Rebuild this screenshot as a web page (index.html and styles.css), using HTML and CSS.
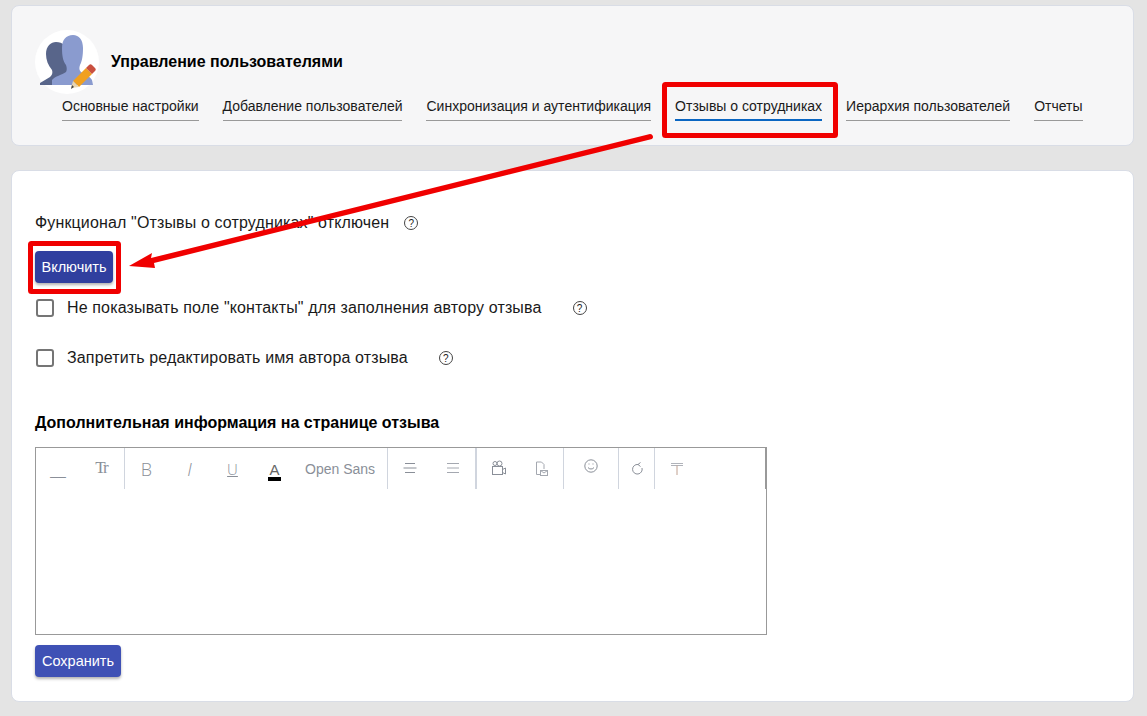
FILE: index.html
```html
<!DOCTYPE html>
<html lang="ru">
<head>
    <meta charset="UTF-8">
    <title>Управление пользователями</title>
    <link rel="stylesheet" href="styles.css">
</head>
<body>
    <header class="head-card">
        <div class="head-top">
            <svg class="avatar" width="64" height="64" viewBox="0 0 64 64">
                <circle cx="32" cy="32" r="32" fill="#fff"/>
                <path d="M5 55 L5 53 L15 47 C17 45 18 43 17 40 C13 35 11 30 11 24 C11 16 16 12 21 12 C28 12 32 16 32 24 L34 55 Z" fill="#58658a"/>
                <path d="M17 55 L17 50 C20 46 27 45 31 42 C32 40 32 38 31 35 C28 31 27 26 27 18 C27 10 31 5 38 5 C44 5 48 10 48 18 C48 26 47 31 45 35 C44 38 44 40 46 42 C50 45 55 46 57 50 L58 55 Z" fill="#8a9bcf"/>
                <path d="M38 51 L51 38 L57 44 L44 57 Z" fill="#f0a020"/>
                <path d="M51 38 L54 35 C55 34 56 34 57 35 L60 38 C61 39 61 40 60 41 L57 44 Z" fill="#c9503f"/>
                <path d="M38 51 L44 57 L36 58 Z" fill="#e8d5b0"/>
                <path d="M37 55 L39 57 L36 59 Z" fill="#444"/>
            </svg>
            <h1 class="head-title">Управление пользователями</h1>
        </div>
        <nav class="tabs">
            <a class="tab">Основные настройки</a>
            <a class="tab">Добавление пользователей</a>
            <a class="tab">Синхронизация и аутентификация</a>
            <a class="tab active">Отзывы о сотрудниках</a>
            <a class="tab">Иерархия пользователей</a>
            <a class="tab">Отчеты</a>
        </nav>
    </header>

    <main class="main-card">
        <div class="status-row">
            <span>Функционал "Отзывы о сотрудниках" отключен</span>
            <span class="help">?</span>
        </div>
        <button class="btn btn-dark">Включить</button>
        <label class="check-row">
            <span class="box"></span>
            <span>Не показывать поле "контакты" для заполнения автору отзыва</span>
            <span class="help help-gap">?</span>
        </label>
        <label class="check-row second">
            <span class="box"></span>
            <span>Запретить редактировать имя автора отзыва</span>
            <span class="help help-gap">?</span>
        </label>
        <h2 class="section-title">Дополнительная информация на странице отзыва</h2>
        <div class="editor">
            <div class="toolbar">
                <div class="group g1">
                    <span class="tool line-tool">__</span>
                    <span class="tool serif">Tr</span>
                </div>
                <div class="group g2">
                    <span class="tool big">B</span>
                    <span class="tool big ital">I</span>
                    <span class="tool under">U</span>
                    <span class="tool color">A</span>
                    <span class="font-name">Open Sans</span>
                </div>
                <div class="group g3">
                    <span class="tool">
                        <svg width="14" height="13" viewBox="0 0 14 13"><path d="M2 1.5H12M0.5 6H13.5M2 10.5H12" stroke="#8a8f98" fill="none"/></svg>
                    </span>
                    <span class="tool">
                        <svg width="14" height="13" viewBox="0 0 14 13"><path d="M1 1.5H13M1 6H13M1 10.5H13" stroke="#a4a8b0" fill="none"/></svg>
                    </span>
                </div>
                <div class="group g4">
                    <span class="tool">
                        <svg width="16" height="16" viewBox="0 0 16 16" fill="none" stroke="#8a8f98"><rect x="1.5" y="6.5" width="10" height="8"/><circle cx="4" cy="3.5" r="2"/><circle cx="8.5" cy="3.5" r="2.5"/><path d="M11.5 9.5L14.5 8V14L11.5 12.5"/></svg>
                    </span>
                    <span class="tool">
                        <svg width="13" height="15" viewBox="0 0 13 15" fill="none" stroke="#a4a8b0"><path d="M6 13.5H1.5V1H6.5L9 3.5V8"/><rect x="5.5" y="9.5" width="7" height="5"/><path d="M5.5 9.5L9 12L12.5 9.5"/></svg>
                    </span>
                </div>
                <div class="group g5">
                    <span class="tool smile">
                        <svg width="14" height="14" viewBox="0 0 14 14" fill="none" stroke="#8a8f98"><circle cx="7" cy="7" r="6.2"/><path d="M4 8.5C5 10.5 9 10.5 10 8.5"/><path d="M4.5 5H5.5M8.5 5H9.5"/></svg>
                    </span>
                </div>
                <div class="group g6">
                    <span class="tool undo">
                        <svg width="12" height="13" viewBox="0 0 12 13" fill="none" stroke="#8a8f98"><path d="M7 2.5A4.8 4.8 0 1 0 11 6"/><path d="M9.5 0.5L7 2.5L9.5 4.5"/></svg>
                    </span>
                </div>
                <div class="group g7">
                    <span class="tool">
                        <svg width="12" height="13" viewBox="0 0 12 13" fill="none"><path d="M0 1.5H12M0 3.5H12" stroke="#b0b3ba"/><path d="M6 3.5V13" stroke="#c0a090"/></svg>
                    </span>
                </div>
            </div>
        </div>
        <button class="btn">Сохранить</button>
    </main>

    <svg class="marks" width="1147" height="716" viewBox="0 0 1147 716">
        <rect x="664.5" y="84.5" width="171" height="51" rx="1" fill="none" stroke="#f00000" stroke-width="5"/>
        <rect x="30.5" y="243.5" width="88" height="48" rx="1" fill="none" stroke="#f00000" stroke-width="5"/>
        <path d="M129 266 L152 253 L151 258 L650 134 C653 134 654 138 652 139 L154 263 L155 268 Z" fill="#f00000"/>
    </svg>
</body>
</html>
```

FILE: styles.css
```css
*{
    box-sizing: border-box;
}
body{
    margin: 0;
    padding: 5px 13px 14px 11px;
    height: 716px;
    overflow: hidden;
    background: #e4e4e4;
    font-family: "Liberation Sans", sans-serif;
    color: #1a1a1a;
    position: relative;
}
.head-card{
    height: 141px;
    background: #f6f6f7;
    border: 1px solid #d9dde6;
    border-radius: 8px;
    padding: 24px 0 0 23px;
}
.head-top{
    display: flex;
    align-items: center;
    height: 64px;
    gap: 12px;
}
.avatar{
    overflow: visible;
}
.head-title{
    margin: 0;
    font-size: 16px;
    font-weight: 700;
    color: #000;
}
.tabs{
    display: flex;
    gap: 24px;
    margin: 4px 0 0 27px;
}
.tab{
    font-size: 14px;
    line-height: 17px;
    padding-bottom: 5px;
    height: 23px;
    border-bottom: 1px solid #999;
    white-space: nowrap;
}
.tab.active{
    border-bottom: 2px solid #0a66c2;
}
.main-card{
    height: 532px;
    margin-top: 24px;
    background: #fff;
    border: 1px solid #d9dde6;
    border-radius: 8px;
    padding: 43px 0 0 23px;
}
.status-row{
    display: flex;
    align-items: center;
    gap: 15px;
    font-size: 16px;
    letter-spacing: 0.14px;
    height: 18px;
}
.help{
    display: inline-flex;
    align-items: center;
    justify-content: center;
    width: 14px;
    height: 14px;
    border: 1px solid #444;
    border-radius: 50%;
    font-size: 10px;
    letter-spacing: 0;
}
.btn{
    display: block;
    height: 32px;
    padding: 0 7px;
    background: #3f51b5;
    color: #fff;
    border: none;
    border-radius: 4px;
    font-family: "Liberation Sans", sans-serif;
    font-size: 14.5px;
    box-shadow: 0 2px 3px rgba(0, 0, 0, 0.3);
}
.btn-dark{
    width: 78px;
    padding: 0;
    margin-top: 19px;
    background: #303f9f;
}
.check-row{
    display: flex;
    align-items: center;
    height: 18px;
    margin-top: 16px;
    font-size: 16px;
    letter-spacing: 0.14px;
}
.check-row.second{
    margin-top: 32px;
}
.box{
    width: 18px;
    height: 18px;
    margin: 0 13px 0 1px;
    border: 2px solid #757575;
    border-radius: 3px;
}
.help-gap{
    margin-left: 31px;
}
.section-title{
    margin: 46px 0 0;
    height: 20px;
    font-size: 16px;
    font-weight: 700;
    line-height: 20px;
    color: #000;
}
.editor{
    width: 732px;
    height: 188px;
    margin-top: 14px;
    border: 1px solid #999;
}
.toolbar{
    display: flex;
    height: 41px;
}
.group{
    display: flex;
    flex: none;
    height: 41px;
    border-right: 1px solid #d0d5de;
}
.g1{ width: 89px; }
.g2{ width: 263px; }
.g3{ width: 89px; border-right-width: 2px; }
.g4{ width: 87px; }
.g5{ width: 55px; }
.g6{ width: 36px; }
.g7{ flex: 1; border-right-color: #999; }
.tool{
    width: 44px;
    display: flex;
    align-items: center;
    justify-content: center;
    padding-bottom: 1px;
    color: #8a8f98;
    font-size: 14px;
}
.g2 .tool{ width: 43px; padding: 1px 0 0; }
.line-tool{ padding-top: 4px; }
.serif{ font-family: "Liberation Serif", serif; font-size: 17px; letter-spacing: -2px; margin-left: -1px; }
.big{ font-family: "Open Sans", sans-serif; font-weight: 300; font-size: 18px; }
.ital{ font-style: italic; }
.under{ text-decoration: underline; font-family: "Open Sans", sans-serif; font-weight: 300; font-size: 15px; }
.g2 .color{
    color: #666;
    position: relative;
    margin-left: -1px;
    font-size: 15px;
}
.color::after{
    content: "";
    position: absolute;
    left: 15px;
    top: 29px;
    width: 13px;
    height: 4px;
    background: #000;
}
.font-name{
    margin-left: 9px;
    line-height: 43px;
    font-size: 14px;
    color: #8a8f98;
}
.smile{ width: 54px; padding-bottom: 6px; }
.undo{ width: 35px; }
.editor + .btn{
    margin-top: 10px;
}
.marks{
    position: absolute;
    left: 0;
    top: 0;
}
```
